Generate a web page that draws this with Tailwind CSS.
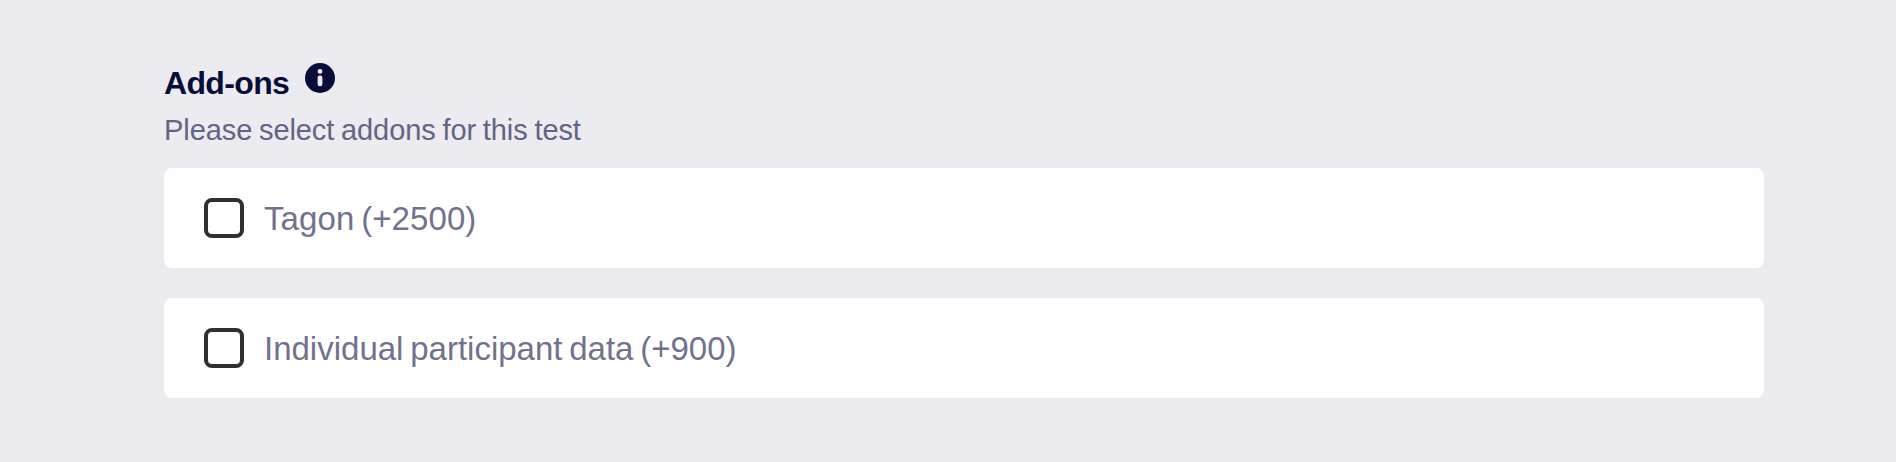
<!DOCTYPE html>
<html lang="en">
<head>
    <meta charset="UTF-8">
    <meta name="viewport" content="width=device-width, initial-scale=1.0">
    <title>Add-ons</title>
    <script src="https://cdn.jsdelivr.net/npm/@tailwindcss/browser@4"></script>
</head>
<body class="min-h-screen bg-[#ecebf0] font-['Liberation_Sans',Arial,sans-serif]">
    <section class="w-[1764px] pl-[164px] pt-[63px]">
        <div class="flex items-start gap-4">
            <h2 class="text-[32px] leading-10 font-bold tracking-[-0.65px] text-[#080d3a]">Add-ons</h2>
            <svg class="size-[30px]" viewBox="0 0 30 30" aria-label="More information">
                <circle cx="15" cy="15" r="15" fill="#080d3a" />
                <circle cx="15" cy="8.4" r="2.4" fill="#ecebf0" />
                <rect x="12.6" y="12.4" width="4.8" height="10.8" rx="2.2" fill="#ecebf0" />
            </svg>
        </div>
        <p class="mt-[9px] text-[29px] leading-9 tracking-[-0.08px] [word-spacing:-1.2px] text-[#646484]">Please select addons for this test</p>

        <div class="mt-5 space-y-[30px]">
            <label class="flex h-[100px] items-center gap-5 rounded-lg bg-white px-10">
                <input type="checkbox" class="size-10 appearance-none rounded-lg border-4 border-[#2f3031]">
                <span class="pt-0.5 text-[33px] leading-10 tracking-[0.08px] [word-spacing:-2.4px] text-[#72728e]">Tagon (+2500)</span>
            </label>
            <label class="flex h-[100px] items-center gap-5 rounded-lg bg-white px-10">
                <input type="checkbox" class="size-10 appearance-none rounded-lg border-4 border-[#2f3031]">
                <span class="pt-0.5 text-[33px] leading-10 [word-spacing:-2.4px] text-[#72728e]">Individual participant data (+900)</span>
            </label>
        </div>
    </section>
</body>
</html>
